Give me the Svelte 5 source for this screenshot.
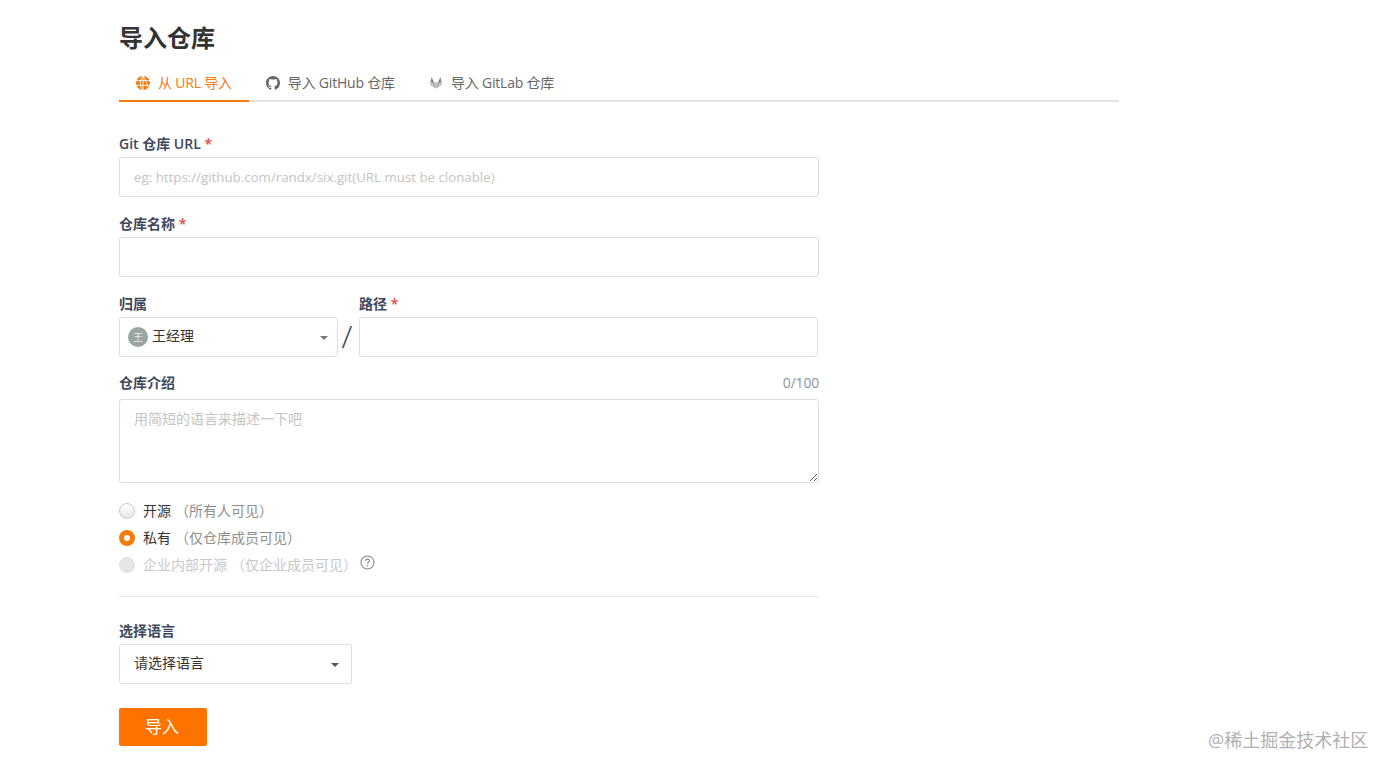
<script lang="ts">
	let name = $state('');
	let path = $state('');
	let desc = $state('');
	let visibility = $state('private');
	const tabs = [
		{ id: 'url', label: '从 URL 导入' },
		{ id: 'github', label: '导入 GitHub 仓库' },
		{ id: 'gitlab', label: '导入 GitLab 仓库' }
	];
</script>

<main class="page">
	<h1>导入仓库</h1>

	<div class="tabs">
		{#each tabs as tab, i}
			<div class="tab" class:active={i === 0}>
				{#if tab.id === 'url'}
					<svg viewBox="0 0 16 16" width="14" height="14">
						<circle cx="8" cy="8" r="8" fill="#f5790f" />
						<path d="M0 5.3h16M0 10.7h16M8 0v16M8 0C4 3.5 4 12.5 8 16M8 0c4 3.5 4 12.5 8 16" fill="none" stroke="#fff" stroke-width="1" />
					</svg>
				{:else if tab.id === 'github'}
					<svg viewBox="0 0 16 16" width="14" height="14">
						<path fill="#666" d="M8 0C3.58 0 0 3.58 0 8c0 3.54 2.29 6.53 5.47 7.59.4.07.55-.17.55-.38 0-.19-.01-.82-.01-1.49-2.01.37-2.53-.49-2.69-.94-.09-.23-.48-.94-.82-1.13-.28-.15-.68-.52-.01-.53.63-.01 1.08.58 1.23.82.72 1.21 1.87.87 2.33.66.07-.52.28-.87.51-1.07-1.78-.2-3.64-.89-3.64-3.95 0-.87.31-1.59.82-2.15-.08-.2-.36-1.02.08-2.12 0 0 .67-.21 2.2.82.64-.18 1.32-.27 2-.27s1.36.09 2 .27c1.53-1.04 2.2-.82 2.2-.82.44 1.1.16 1.92.08 2.12.51.56.82 1.27.82 2.15 0 3.07-1.87 3.75-3.65 3.95.29.25.54.73.54 1.48 0 1.07-.01 1.93-.01 2.2 0 .21.15.46.55.38A8.01 8.01 0 0 0 16 8c0-4.42-3.58-8-8-8z" />
					</svg>
				{:else}
					<svg viewBox="0 0 16 16" width="14" height="14">
						<path fill="#bdbdbd" d="M8 15 5.900 7.200h4.200z" />
						<path fill="#777" d="M7.300 14 1.300 9.700 3 1 5.400 7.200z" />
						<path fill="#777" d="M8.700 14l6-4.300L13 1l-2.400 6.200z" />
						<path fill="#c9c9c9" d="M.4 7.200h3.800L7 13.600 1 9.300zM15.600 7.200h-3.800L9 13.600l6-4.300z" />
					</svg>
				{/if}
				<span class="tab-text">{tab.label}</span>
			</div>
		{/each}
	</div>

	<form class="form" onsubmit={(e) => e.preventDefault()}>
		<div class="field">
			<div class="label">Git 仓库 URL <b>*</b></div>
			<input class="input url" placeholder="eg: https://github.com/randx/six.git(URL must be clonable)" />
		</div>

		<div class="field">
			<div class="label">仓库名称 <b>*</b></div>
			<input class="input" bind:value={name} />
		</div>

		<div class="field owner-row">
			<div class="owner">
				<div class="label">归属</div>
				<div class="select owner-select">
					<span class="avatar">王</span>
					<span class="owner-name">王经理</span>
					<i class="caret"></i>
				</div>
			</div>
			<span class="slash">/</span>
			<div class="path">
				<div class="label">路径 <b>*</b></div>
				<input class="input" bind:value={path} />
			</div>
		</div>

		<div class="desc">
			<div class="label desc-label">
				<span>仓库介绍</span>
				<span class="count">0/100</span>
			</div>
			<textarea class="input textarea" placeholder="用简短的语言来描述一下吧" bind:value={desc}></textarea>
		</div>

		<div class="radios">
			<label class="radio">
				<input type="radio" value="public" bind:group={visibility} />
				<span class="dot"></span>
				<span class="main">开源</span>
				<span class="note">（所有人可见）</span>
			</label>
			<label class="radio">
				<input type="radio" value="private" bind:group={visibility} />
				<span class="dot"></span>
				<span class="main">私有</span>
				<span class="note">（仅仓库成员可见）</span>
			</label>
			<label class="radio disabled">
				<input type="radio" value="internal" disabled bind:group={visibility} />
				<span class="dot"></span>
				<span class="main">企业内部开源</span>
				<span class="note">（仅企业成员可见）</span>
				<svg class="help" viewBox="0 0 16 16" width="15" height="15">
					<circle cx="8" cy="8" r="7" fill="none" stroke="#888" stroke-width="1.100" />
					<path d="M5.900 6.300c0-1.200 1-1.900 2.100-1.900s2.100.7 2.100 1.800c0 1.500-2.100 1.500-2.100 3.100" fill="none" stroke="#888" stroke-width="1.100" />
					<circle cx="8" cy="11.400" r=".8" fill="#888" />
				</svg>
			</label>
		</div>

		<hr />

		<div class="lang">
			<div class="label">选择语言</div>
			<div class="select lang-select">
				<span>请选择语言</span>
				<i class="caret dark"></i>
			</div>
		</div>

		<button class="submit" type="submit">导入</button>
	</form>
</main>

<div class="watermark">@稀土掘金技术社区</div>

<style>
	:global(body) {
		background: #fff;
		font-family: 'Open Sans', 'Noto Sans CJK SC', sans-serif;
		color: #333;
		font-size: 14px;
	}

	.page {
		width: 1000px;
		margin-left: 119px;
		padding-top: 22px;
	}

	h1 {
		margin: 0;
		font-size: 24px;
		line-height: 32px;
		font-weight: 700;
		color: #333;
	}

	.tabs {
		display: flex;
		margin-top: 8px;
		border-bottom: 2px solid #e3e3e3;
		height: 38px;
	}

	.tab {
		display: flex;
		align-items: center;
		gap: 8px;
		box-sizing: border-box;
		padding: 3px 17px 0;
		height: 38px;
		color: #666;
		font-size: 14px;
		line-height: 32px;
	}

	.tab-text {
		letter-spacing: -0.2px;
	}

	.tab.active {
		color: #f5790f;
		box-shadow: inset 0 -2px 0 #f5790f;
		height: 40px;
		padding-bottom: 2px;
	}

	.form {
		width: 700px;
		margin-top: 33px;
	}

	.label {
		font-size: 14px;
		line-height: 18px;
		font-weight: 600;
		color: #40485b;
		margin-bottom: 4px;
	}

	.label b {
		color: #e5484d;
		font-weight: 600;
	}

	.field {
		height: 62px;
		margin-bottom: 18px;
	}

	.input {
		display: block;
		box-sizing: border-box;
		width: 100%;
		height: 40px;
		padding: 0 14px;
		border: 1px solid #dedede;
		border-radius: 3px;
		background: #fff;
		outline: none;
		font: inherit;
		font-size: 14px;
		color: #333;
	}

	.input.url {
		font-size: 13.3px;
	}

	.input::placeholder {
		color: #c4c4c4;
	}

	.owner-row {
		display: flex;
		align-items: flex-start;
		margin-bottom: 17px;
	}

	.owner {
		width: 219px;
	}

	.path {
		width: 459px;
		margin-left: auto;
		margin-right: 1px;
	}

	.slash {
		margin-top: 21px;
		width: 18px;
		text-align: center;
		font-size: 32px;
		line-height: 40px;
		font-weight: 300;
		color: #40485b;
	}

	.select {
		box-sizing: border-box;
		position: relative;
		display: flex;
		align-items: center;
		height: 40px;
		padding-bottom: 4px;
		border: 1px solid #dedede;
		border-radius: 3px;
		background: #fff;
		font-size: 14px;
	}

	.owner-select {
		padding-left: 8px;
		padding-bottom: 0;
		gap: 4px;
	}

	.owner-name {
		margin-top: -5px;
	}

	.avatar {
		width: 20px;
		height: 20px;
		border-radius: 50%;
		background: #9aa5a3;
		color: #e8ecec;
		font-size: 10px;
		line-height: 20px;
		text-align: center;
	}

	.caret {
		position: absolute;
		right: 9px;
		top: 18px;
		border-left: 4px solid transparent;
		border-right: 4px solid transparent;
		border-top: 4px solid #777;
	}

	.caret.dark {
		right: 12px;
		border-top-color: #555;
	}

	.desc-label {
		display: flex;
		justify-content: space-between;
		margin-bottom: 7px;
	}

	.count {
		font-weight: 400;
		color: #8c92a4;
		font-size: 14px;
		letter-spacing: -0.2px;
	}

	.textarea {
		height: 84px;
		padding-top: 9px;
		line-height: 20px;
		resize: vertical;
	}

	.radios {
		margin-top: 14px;
	}

	.radio {
		display: flex;
		align-items: center;
		height: 27px;
		font-size: 14px;
		position: relative;
	}

	.radio input {
		position: absolute;
		opacity: 0;
		margin: 0;
	}

	.dot {
		box-sizing: border-box;
		width: 16px;
		height: 16px;
		border-radius: 50%;
		border: 1px solid #c8c8c8;
		background: linear-gradient(#fff, #e9e9e9);
		margin-right: 8px;
	}

	.radio input:checked + .dot {
		border: 5px solid #f57b0b;
		background: #fff;
	}

	.radio .main {
		color: #333;
		margin-top: -2px;
	}

	.note {
		color: #8e8e8e;
		margin-left: 4px;
		margin-top: -2px;
	}

	.radio.disabled .dot {
		background: #e6e6e6;
		border-color: #e0e0e0;
	}

	.radio.disabled .main,
	.radio.disabled .note {
		color: #c8c8c8;
	}

	.help {
		margin: -5px 0 0 3px;
	}

	hr {
		margin: 18px 0 0;
		border: 0;
		border-top: 1px solid #e3e3e3;
	}

	.lang {
		margin-top: 25px;
	}

	.lang-select {
		width: 233px;
		padding-left: 14px;
		color: #333;
	}

	.submit {
		display: block;
		width: 88px;
		height: 38px;
		margin-top: 24px;
		padding: 0 2px 4px 0;
		border: 0;
		border-radius: 2px;
		background: #fe7300;
		color: #fff;
		font: inherit;
		font-size: 17px;
	}

	.watermark {
		position: absolute;
		left: 1208px;
		top: 728px;
		font-size: 18px;
		line-height: 24px;
		color: #b0b0b0;
		white-space: nowrap;
	}
</style>
